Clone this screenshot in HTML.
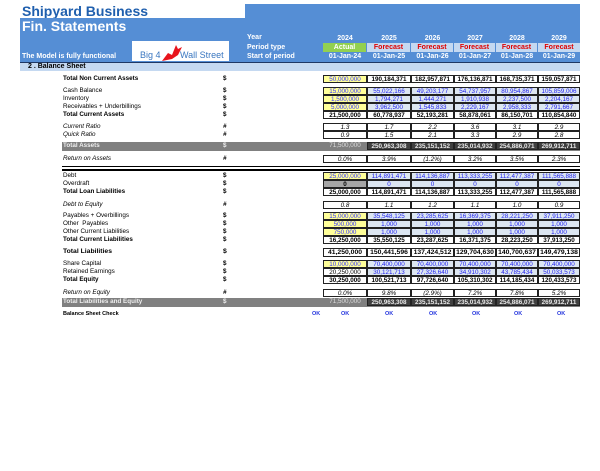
<!DOCTYPE html>
<html><head><meta charset="utf-8"><style>
body{margin:0;width:600px;height:471px;background:#fff;position:relative;overflow:hidden;font-family:"Liberation Sans",Arial,sans-serif}
.a{position:absolute}
.r{position:absolute;left:0;width:600px;height:8px;font-size:6.3px;line-height:8px;color:#000}
.l{position:absolute;left:63px}
.d{position:absolute;left:223px;font-weight:bold}
.c{position:absolute;top:0;height:8px;line-height:7px;text-align:center;border:1px solid #222;box-sizing:border-box;background:#fff}
.c1{left:323px;width:44px}.c2{left:367px;width:44px}.c3{left:411px;width:43px}.c4{left:454px;width:42px}.c5{left:496px;width:42px}.c6{left:538px;width:42px}
.y{background:#ffff99;color:#3333ff}
.bl{background:#dce6f1;color:#2222ee}
.b{font-weight:bold}
.i{font-style:italic}
.g .c{background:#404040;color:#e8e8e8;font-weight:bold;border-color:#222}
.g .c1{background:#808080;color:#ddd;font-weight:normal;border:none}
.hd{position:absolute;font-size:7px;font-weight:bold;color:#fff;text-align:center;height:9px;line-height:9px}
</style></head><body>
<div class="a" style="left:22px;top:3px;font-size:14px;font-weight:bold;color:#1f5fae">Shipyard Business</div>
<div class="a" style="left:245px;top:4px;width:335px;height:58px;background:#558ed5"></div>
<div class="a" style="left:20px;top:18px;width:560px;height:44px;background:#558ed5"></div>
<div class="a" style="left:22px;top:18px;font-size:14px;font-weight:bold;color:#fff">Fin. Statements</div>
<div class="a" style="left:22px;top:53px;font-size:7px;font-weight:bold;color:#fff">The Model is fully functional</div>
<div class="a" style="left:132px;top:41px;width:97px;height:20px;background:#fff"></div>
<div class="a" style="left:140px;top:50px;font-size:9px;color:#3a77c0">Big 4</div>
<div class="a" style="left:180px;top:50px;font-size:9px;color:#3a77c0">Wall Street</div>
<svg class="a" style="left:160px;top:43px" width="24" height="20"><path d="M2 18 L8 10 L12 12 L16 2 L18 6 L22 4 L18 12 L12 16 Z" fill="#e8141c"/></svg>
<div class="a" style="left:247px;top:33px;font-size:7px;font-weight:bold;color:#fff;line-height:9.5px">Year<br>Period type<br>Start of period</div>
<div class="hd" style="left:323px;top:34px;width:44px">2024</div>
<div class="hd" style="left:367px;top:34px;width:44px">2025</div>
<div class="hd" style="left:411px;top:34px;width:43px">2026</div>
<div class="hd" style="left:454px;top:34px;width:42px">2027</div>
<div class="hd" style="left:496px;top:34px;width:42px">2028</div>
<div class="hd" style="left:538px;top:34px;width:42px">2029</div>
<div class="hd" style="left:323px;top:43px;width:43px;background:#92d050">Actual</div>
<div class="hd" style="left:367px;top:43px;width:43px;background:#c5d9f1;color:#e00000">Forecast</div>
<div class="hd" style="left:411px;top:43px;width:42px;background:#c5d9f1;color:#e00000">Forecast</div>
<div class="hd" style="left:454px;top:43px;width:41px;background:#c5d9f1;color:#e00000">Forecast</div>
<div class="hd" style="left:496px;top:43px;width:41px;background:#c5d9f1;color:#e00000">Forecast</div>
<div class="hd" style="left:538px;top:43px;width:42px;background:#c5d9f1;color:#e00000">Forecast</div>
<div class="hd" style="left:323px;top:52px;width:44px">01-Jan-24</div>
<div class="hd" style="left:367px;top:52px;width:44px">01-Jan-25</div>
<div class="hd" style="left:411px;top:52px;width:43px">01-Jan-26</div>
<div class="hd" style="left:454px;top:52px;width:42px">01-Jan-27</div>
<div class="hd" style="left:496px;top:52px;width:42px">01-Jan-28</div>
<div class="hd" style="left:538px;top:52px;width:42px">01-Jan-29</div>
<div class="a" style="left:20px;top:62px;width:560px;height:1px;background:#1f3864"></div>
<div class="a" style="left:20px;top:63px;width:560px;height:8px;background:#c5d9f1;font-size:7px;font-weight:bold;line-height:8px;padding-left:8px;box-sizing:border-box">2 . Balance Sheet</div>

<div class="r b" style="top:75px"><span class="l">Total Non Current Assets</span><span class="d">$</span><span class="c c1 y" style="font-weight:normal">50,000,000</span><span class="c c2">190,184,371</span><span class="c c3">182,957,871</span><span class="c c4">176,136,871</span><span class="c c5">168,735,371</span><span class="c c6">159,057,871</span></div>

<div class="r" style="top:87px"><span class="l">Cash Balance</span><span class="d">$</span><span class="c c1 y">15,000,000</span><span class="c c2 bl">55,022,166</span><span class="c c3 bl">49,203,177</span><span class="c c4 bl">54,737,957</span><span class="c c5 bl">80,954,867</span><span class="c c6 bl">105,859,006</span></div>
<div class="r" style="top:95px"><span class="l">Inventory</span><span class="d">$</span><span class="c c1 y">1,500,000</span><span class="c c2 bl">1,794,271</span><span class="c c3 bl">1,444,271</span><span class="c c4 bl">1,910,938</span><span class="c c5 bl">2,237,500</span><span class="c c6 bl">2,204,167</span></div>
<div class="r" style="top:103px"><span class="l">Receivables + Underbillings</span><span class="d">$</span><span class="c c1 y">5,000,000</span><span class="c c2 bl">3,962,500</span><span class="c c3 bl">1,545,833</span><span class="c c4 bl">2,229,167</span><span class="c c5 bl">2,958,333</span><span class="c c6 bl">2,791,667</span></div>
<div class="r b" style="top:111px"><span class="l">Total Current Assets</span><span class="d">$</span><span class="c c1">21,500,000</span><span class="c c2">60,778,937</span><span class="c c3">52,193,281</span><span class="c c4">58,878,061</span><span class="c c5">86,150,701</span><span class="c c6">110,854,840</span></div>

<div class="r i" style="top:123px"><span class="l">Current Ratio</span><span class="d">#</span><span class="c c1">1.3</span><span class="c c2">1.7</span><span class="c c3">2.2</span><span class="c c4">3.6</span><span class="c c5">3.1</span><span class="c c6">2.9</span></div>
<div class="r i" style="top:131px"><span class="l">Quick Ratio</span><span class="d">#</span><span class="c c1">0.9</span><span class="c c2">1.5</span><span class="c c3">2.1</span><span class="c c4">3.3</span><span class="c c5">2.9</span><span class="c c6">2.8</span></div>

<div class="a" style="left:62px;top:142px;width:518px;height:9px;background:#808080"></div>
<div class="r g" style="top:142px;height:9px;font-weight:bold;color:#eee"><span class="l">Total Assets</span><span class="d">$</span><span class="c c1">71,500,000</span><span class="c c2">250,963,308</span><span class="c c3">235,151,152</span><span class="c c4">235,014,932</span><span class="c c5">254,886,071</span><span class="c c6">269,912,711</span></div>

<div class="r i" style="top:155px"><span class="l">Return on Assets</span><span class="d">#</span><span class="c c1">0.0%</span><span class="c c2">3.9%</span><span class="c c3">(1.2%)</span><span class="c c4">3.2%</span><span class="c c5">3.5%</span><span class="c c6">2.3%</span></div>

<div class="a" style="left:62px;top:166px;width:518px;height:1px;background:#000"></div>
<div class="a" style="left:62px;top:169px;width:518px;height:2px;background:#000"></div>

<div class="r" style="top:172px"><span class="l">Debt</span><span class="d">$</span><span class="c c1 y">25,000,000</span><span class="c c2 bl">114,891,471</span><span class="c c3 bl">114,136,887</span><span class="c c4 bl">113,333,255</span><span class="c c5 bl">112,477,387</span><span class="c c6 bl">111,565,888</span></div>
<div class="r" style="top:180px"><span class="l">Overdraft</span><span class="d">$</span><span class="c c1 b" style="background:#a6a6a6">0</span><span class="c c2 bl">0</span><span class="c c3 bl">0</span><span class="c c4 bl">0</span><span class="c c5 bl">0</span><span class="c c6 bl">0</span></div>
<div class="r b" style="top:188px"><span class="l">Total Loan Liabilities</span><span class="d">$</span><span class="c c1">25,000,000</span><span class="c c2">114,891,471</span><span class="c c3">114,136,887</span><span class="c c4">113,333,255</span><span class="c c5">112,477,387</span><span class="c c6">111,565,888</span></div>

<div class="r i" style="top:201px"><span class="l">Debt to Equity</span><span class="d">#</span><span class="c c1">0.8</span><span class="c c2">1.1</span><span class="c c3">1.2</span><span class="c c4">1.1</span><span class="c c5">1.0</span><span class="c c6">0.9</span></div>

<div class="r" style="top:212px"><span class="l">Payables + Overbillings</span><span class="d">$</span><span class="c c1 y">15,000,000</span><span class="c c2 bl">35,548,125</span><span class="c c3 bl">23,285,625</span><span class="c c4 bl">16,369,375</span><span class="c c5 bl">28,221,250</span><span class="c c6 bl">37,911,250</span></div>
<div class="r" style="top:220px"><span class="l">Other &nbsp;Payables</span><span class="d">$</span><span class="c c1 y">500,000</span><span class="c c2 bl">1,000</span><span class="c c3 bl">1,000</span><span class="c c4 bl">1,000</span><span class="c c5 bl">1,000</span><span class="c c6 bl">1,000</span></div>
<div class="r" style="top:228px"><span class="l">Other Current Liabilities</span><span class="d">$</span><span class="c c1 y">750,000</span><span class="c c2 bl">1,000</span><span class="c c3 bl">1,000</span><span class="c c4 bl">1,000</span><span class="c c5 bl">1,000</span><span class="c c6 bl">1,000</span></div>
<div class="r b" style="top:236px"><span class="l">Total Current Liabilities</span><span class="d">$</span><span class="c c1">16,250,000</span><span class="c c2">35,550,125</span><span class="c c3">23,287,625</span><span class="c c4">16,371,375</span><span class="c c5">28,223,250</span><span class="c c6">37,913,250</span></div>

<div class="r b" style="top:248px;height:9px;font-size:6.8px"><span class="l">Total Liabilities</span><span class="d">$</span><span class="c c1" style="height:9px">41,250,000</span><span class="c c2" style="height:9px">150,441,596</span><span class="c c3" style="height:9px">137,424,512</span><span class="c c4" style="height:9px">129,704,630</span><span class="c c5" style="height:9px">140,700,637</span><span class="c c6" style="height:9px">149,479,138</span></div>

<div class="r" style="top:260px"><span class="l">Share Capital</span><span class="d">$</span><span class="c c1 y">10,000,000</span><span class="c c2 bl">70,400,000</span><span class="c c3 bl">70,400,000</span><span class="c c4 bl">70,400,000</span><span class="c c5 bl">70,400,000</span><span class="c c6 bl">70,400,000</span></div>
<div class="r" style="top:268px"><span class="l">Retained Earnings</span><span class="d">$</span><span class="c c1">20,250,000</span><span class="c c2 bl">30,121,713</span><span class="c c3 bl">27,326,640</span><span class="c c4 bl">34,910,302</span><span class="c c5 bl">43,785,434</span><span class="c c6 bl">50,033,573</span></div>
<div class="r b" style="top:276px"><span class="l">Total Equity</span><span class="d">$</span><span class="c c1">30,250,000</span><span class="c c2">100,521,713</span><span class="c c3">97,726,640</span><span class="c c4">105,310,302</span><span class="c c5">114,185,434</span><span class="c c6">120,433,573</span></div>

<div class="r i" style="top:289px"><span class="l">Return on Equity</span><span class="d">#</span><span class="c c1">0.0%</span><span class="c c2">9.8%</span><span class="c c3">(2.9%)</span><span class="c c4">7.2%</span><span class="c c5">7.8%</span><span class="c c6">5.2%</span></div>

<div class="a" style="left:62px;top:298px;width:518px;height:9px;background:#808080"></div>
<div class="r g" style="top:298px;height:9px;font-weight:bold;color:#eee"><span class="l">Total Liabilities and Equity</span><span class="d">$</span><span class="c c1">71,500,000</span><span class="c c2">250,963,308</span><span class="c c3">235,151,152</span><span class="c c4">235,014,932</span><span class="c c5">254,886,071</span><span class="c c6">269,912,711</span></div>

<div class="r b" style="top:310px;font-size:5.5px"><span class="l">Balance Sheet Check</span>
<span class="a" style="left:312px;color:#2233dd">OK</span><span class="a" style="left:341px;color:#2233dd">OK</span><span class="a" style="left:385px;color:#2233dd">OK</span><span class="a" style="left:429px;color:#2233dd">OK</span><span class="a" style="left:472px;color:#2233dd">OK</span><span class="a" style="left:514px;color:#2233dd">OK</span><span class="a" style="left:557px;color:#2233dd">OK</span></div>
</body></html>
